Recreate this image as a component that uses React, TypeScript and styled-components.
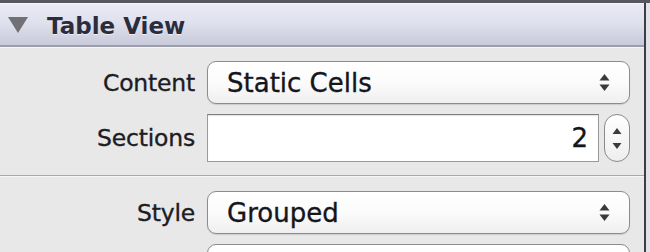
import React from 'react';
import styled, { createGlobalStyle } from 'styled-components';

const GlobalStyle = createGlobalStyle`
  html, body {
    margin: 0;
    padding: 0;
    background: #e8e8e8;
    overflow: hidden;
  }
  body {
    font-family: 'DejaVu Sans', 'Liberation Sans', sans-serif;
  }
`;

const Window = styled.div`
  display: flex;
  width: 650px;
  height: 252px;
  overflow: hidden;
  border-top: 3px solid #56575c;
  box-sizing: border-box;
`;

const Panel = styled.div`
  width: 644px;
  display: flex;
  flex-direction: column;
  background: #e8e8e8;
`;

const Edge = styled.div`
  width: 4px;
  border-left: 2px solid #3d3e44;
  background: #e2e3ea;
`;

const Header = styled.div`
  height: 44px;
  display: flex;
  align-items: center;
  gap: 18px;
  padding-left: 7px;
  background: linear-gradient(#e9eaf5 0%, #e0e1ee 45%, #c8cad9 100%);
  border-top: 1px solid #f4f5fb;
  border-bottom: 2px solid #9d9eac;
  box-sizing: border-box;
  flex-shrink: 0;
`;

const Title = styled.span`
  font-weight: bold;
  font-size: 23px;
  color: #2b2c3c;
  text-shadow: 0 1px 0 rgba(255, 255, 255, 0.6);
  margin-top: 3px;
`;

const Section = styled.div<{ $top: number; $bottom: number; $divider?: boolean }>`
  display: grid;
  grid-template-columns: 195px 1fr;
  column-gap: 12px;
  row-gap: 10px;
  align-items: center;
  padding: ${(p) => p.$top}px 14px ${(p) => p.$bottom}px 0;
  border-top: 1px solid #f6f6f6;
  ${(p) =>
    p.$divider &&
    `border-bottom: 1px solid #a9a9a9; box-shadow: 0 1px 0 #fafafa;`}
`;

const Label = styled.span`
  font-size: 23.5px;
  color: #1c1c24;
  text-align: right;
  letter-spacing: -0.2px;
  -webkit-text-stroke: 0.35px #1c1c24;
`;

const Popup = styled.div`
  height: 43px;
  display: flex;
  align-items: center;
  justify-content: space-between;
  padding: 0 19px 0 19px;
  box-sizing: border-box;
  border: 1.5px solid #8c8c8c;
  border-radius: 9px;
  background: linear-gradient(#ffffff 0%, #fbfbfb 50%, #efefef 100%);
  box-shadow: 0 1px 1px rgba(0, 0, 0, 0.12);
  font-size: 26px;
  color: #15151c;
  -webkit-text-stroke: 0.35px #15151c;
`;

const FieldRow = styled.div`
  display: flex;
  gap: 5px;
  height: 48px;
`;

const Field = styled.div`
  flex: 1;
  display: flex;
  align-items: center;
  justify-content: flex-end;
  padding-right: 10px;
  border: 1.5px solid #9a9a9a;
  border-top-color: #7e7e7e;
  background: #ffffff;
  box-shadow: inset 0 1px 1px rgba(0, 0, 0, 0.12);
  font-size: 26px;
  color: #15151c;
  -webkit-text-stroke: 0.35px #15151c;
`;

const Stepper = styled.div`
  width: 26px;
  display: flex;
  flex-direction: column;
  align-items: center;
  justify-content: space-around;
  border: 1.5px solid #8a8a8a;
  border-radius: 13px;
  background: linear-gradient(#ffffff, #eeeeee);
  box-sizing: border-box;
  padding: 8px 0;
`;

const Arrows = () => (
  <svg width="11" height="19" viewBox="0 0 11 19">
    <path d="M5.5 1 L10.5 7.5 L0.5 7.5 Z" fill="#3a3a3a" />
    <path d="M5.5 18 L10.5 11.5 L0.5 11.5 Z" fill="#3a3a3a" />
  </svg>
);

const Arrow = ({ down }: { down?: boolean }) => (
  <svg width="10" height="8" viewBox="0 0 10 8">
    <path d={down ? 'M5 7 L9.5 1 L0.5 1 Z' : 'M5 1 L9.5 7 L0.5 7 Z'} fill="#3a3a3a" />
  </svg>
);

const Disclosure = () => (
  <svg width="22" height="18" viewBox="0 0 22 18">
    <path d="M1 1 L21 1 L11 17 Z" fill="#707075" />
  </svg>
);

const TableView = () => {
  return (
    <Window>
      <GlobalStyle />
      <Panel>
        <Header>
          <Disclosure />
          <Title>Table View</Title>
        </Header>
        <Section $top={13} $bottom={13} $divider>
          <Label>Content</Label>
          <Popup>
            <span>Static Cells</span>
            <Arrows />
          </Popup>
          <Label>Sections</Label>
          <FieldRow>
            <Field>2</Field>
            <Stepper>
              <Arrow />
              <Arrow down />
            </Stepper>
          </FieldRow>
        </Section>
        <Section $top={14} $bottom={0}>
          <Label>Style</Label>
          <Popup>
            <span>Grouped</span>
            <Arrows />
          </Popup>
          <span />
          <Popup />
        </Section>
      </Panel>
      <Edge />
    </Window>
  );
};

export default function App() {
  return <TableView />;
}
